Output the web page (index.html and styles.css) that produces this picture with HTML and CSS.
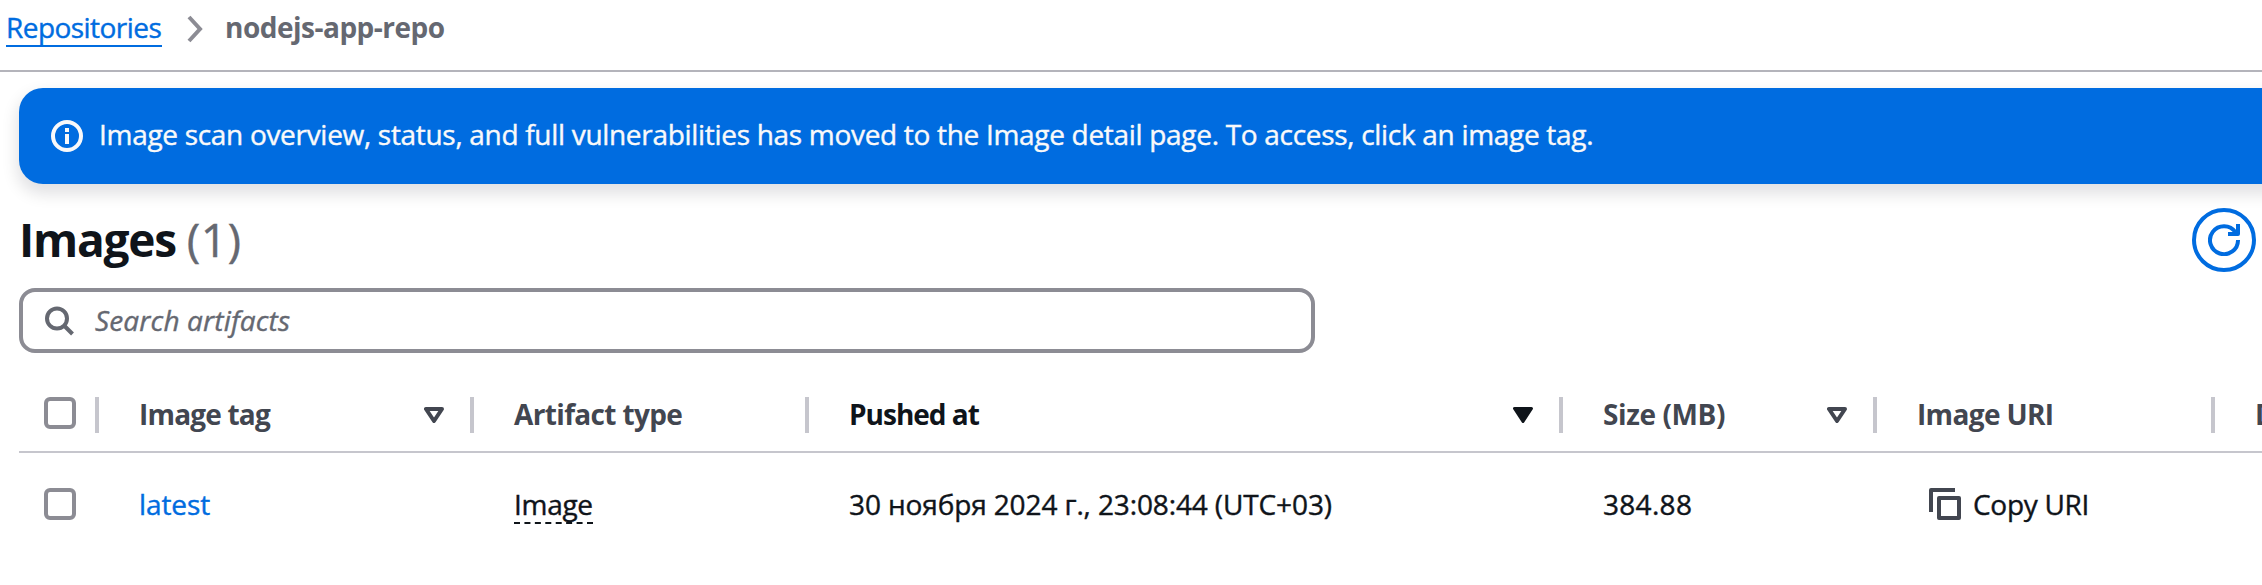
FILE: index.html
```html
<!DOCTYPE html>
<html lang="en">
<head>
<meta charset="utf-8">
<title>nodejs-app-repo</title>
<link rel="stylesheet" href="styles.css">
</head>
<body>
<nav class="breadcrumbs">
  <a class="crumb-link" href="#">Repositories</a>
  <svg class="chevron" width="16" height="28" viewBox="0 0 16 28"><path d="M2 2l11 12L2 26" fill="none" stroke="#8c8c94" stroke-width="4"/></svg>
  <span class="crumb-current">nodejs-app-repo</span>
</nav>
<main class="content">
  <div class="flash">
    <svg class="flash-icon" width="32" height="32" viewBox="0 0 32 32"><circle cx="16" cy="16" r="14" fill="none" stroke="#f9f9fa" stroke-width="4"/><path d="M14 8h4v4h-4zM14 14h4v10h-4z" fill="#f9f9fa"/></svg>
    <span class="flash-text">Image scan overview, status, and full vulnerabilities has moved to the Image detail page. To access, click an image tag.</span>
  </div>
  <header class="title-row">
    <h1 class="title">Images <span class="counter">(1)</span></h1>
    <button class="refresh" aria-label="Refresh">
      <svg width="32" height="32" viewBox="0 0 32 32" fill="none" stroke="#006ce0" stroke-width="4"><path d="M30 16A14 14 0 1 1 27.5 8.2"/><path d="M30 0v10H20" stroke-linejoin="round"/></svg>
    </button>
  </header>
  <div class="search">
    <svg width="30" height="30" viewBox="0 0 30 30" fill="none" stroke="#656871" stroke-width="4"><circle cx="12" cy="12.5" r="10"/><path d="M19 19.5l8.5 8.5"/></svg>
    <span class="search-text">Search artifacts</span>
  </div>
  <div class="table">
    <div class="row head">
      <div class="cell check"><span class="box"></span></div>
      <div class="cell"><span class="label tag-label">Image tag</span><svg class="sort" width="20" height="16" viewBox="0 0 20 16"><path d="M2 2h16l-8 12z" fill="none" stroke="#424650" stroke-width="4" stroke-linejoin="round"/></svg></div>
      <div class="cell"><span class="label type-label">Artifact type</span></div>
      <div class="cell sorted"><span class="label pushed-label">Pushed at</span><svg class="sort" width="20" height="16" viewBox="0 0 20 16"><path d="M1.5 1.5h17L10 14.5z" fill="#0f141a" stroke="#0f141a" stroke-width="3" stroke-linejoin="round"/></svg></div>
      <div class="cell"><span class="label size-label">Size (MB)</span><svg class="sort" width="20" height="16" viewBox="0 0 20 16"><path d="M2 2h16l-8 12z" fill="none" stroke="#424650" stroke-width="4" stroke-linejoin="round"/></svg></div>
      <div class="cell"><span class="label uri-label">Image URI</span></div>
      <div class="cell last"><span class="label">Digest</span></div>
    </div>
    <div class="row body">
      <div class="cell check"><span class="box"></span></div>
      <div class="cell"><a class="tag-link" href="#">latest</a></div>
      <div class="cell"><span class="artifact">Image</span></div>
      <div class="cell"><span class="date">30 ноября 2024 г., 23:08:44 (UTC+03)</span></div>
      <div class="cell"><span class="size">384.88</span></div>
      <div class="cell copy"><svg width="32" height="32" viewBox="0 0 32 32" fill="none" stroke="#424650" stroke-width="4"><path d="M2 24V2h24" stroke-linejoin="round"/><path d="M10 10h20v20H10z" stroke-linejoin="round"/></svg><span class="copy-label">Copy URI</span></div>
      <div class="cell last"></div>
    </div>
  </div>
</main>
</body>
</html>
```
FILE: styles.css
```css
* { box-sizing: border-box; }
body {
  margin: 0;
  height: 585px;
  overflow: hidden;
  background: #fff;
  color: #0f141a;
  font: 28px/40px "Open Sans", "Noto Sans", sans-serif;
}
svg { display: block; flex: none; }
/* Regular text is drawn a touch heavier than the font's own weight */
.crumb-link, .flash-text, .counter, .search-text, .body { -webkit-text-stroke: 0.4px; }
.breadcrumbs {
  display: flex;
  align-items: flex-start;
  height: 72px;
  padding: 7px 0 0 6px;
  border-bottom: 2px solid #b4b4bb;
}
.crumb-link {
  width: 156px;
  height: 40px;
  color: #006ce0;
  text-decoration: none;
  letter-spacing: -0.55px;
  white-space: nowrap;
  border-bottom: 2px solid #006ce0;
}
.chevron { margin: 8px 0 0 25px; }
.crumb-current {
  margin-left: 22px;
  color: #656871;
  font-weight: 700;
  letter-spacing: -0.5px;
}
.content { padding: 16px 0 0 19px; }
.flash {
  display: flex;
  align-items: center;
  height: 96px;
  margin-right: -40px;
  padding-left: 32px;
  border-radius: 24px;
  background: #006ce0;
  color: #f9f9fa;
  box-shadow: 0 8px 16px 2px rgba(0, 7, 22, 0.12);
}
.flash-text {
  margin-left: 16px;
  padding-bottom: 4px;
  letter-spacing: -0.305px;
  white-space: nowrap;
}
.title-row {
  display: flex;
  align-items: center;
  justify-content: space-between;
  height: 64px;
  margin: 24px 6px 0 0;
}
.title {
  margin: 0;
  padding-bottom: 3px;
  font-size: 46px;
  line-height: 60px;
  font-weight: 700;
  letter-spacing: -1.2px;
}
.counter { color: #656871; font-weight: 400; letter-spacing: 0.4px; }
.refresh {
  display: grid;
  place-items: center;
  width: 64px;
  height: 64px;
  padding: 0;
  border: 4px solid #006ce0;
  border-radius: 50%;
  background: #fff;
}
.search {
  display: flex;
  align-items: center;
  width: 1296px;
  height: 65px;
  margin-top: 16px;
  padding-left: 22px;
  border: 4px solid #8c8c94;
  border-radius: 16px;
}
.search-text {
  margin-left: 20px;
  padding-bottom: 1px;
  color: #656871;
  font-style: italic;
  letter-spacing: 0.15px;
}
.table { margin-top: 22px; }
.row {
  display: grid;
  grid-template-columns: 80px 375px 335px 754px 314px 338px 1fr;
}
.head {
  height: 78px;
  border-bottom: 2px solid #c6c6cd;
  color: #424650;
  font-weight: 700;
}
.cell {
  display: flex;
  align-items: center;
  padding-left: 40px;
  white-space: nowrap;
}
.check { padding-left: 25px; }
.box {
  width: 32px;
  height: 32px;
  border: 4px solid #8c8c94;
  border-radius: 6px;
}
.label { padding-top: 2px; }
/* Column separators centred on the header text */
.head .cell {
  background: linear-gradient(#c6c6cd, #c6c6cd) right 22px / 4px 36px no-repeat;
}
.head .last { background: none; overflow: hidden; }
.last { min-width: 0; }
.sort { margin: 4px 30px 0 auto; }
.sorted { color: #0f141a; }
.tag-label { letter-spacing: -0.8px; }
.type-label { letter-spacing: -0.65px; }
.pushed-label { letter-spacing: -1px; }
.size-label { letter-spacing: -0.4px; }
.uri-label { letter-spacing: -0.65px; }
.body { height: 102px; }
.tag-link { color: #006ce0; text-decoration: none; letter-spacing: -0.1px; }
.artifact {
  height: 40px;
  letter-spacing: -0.3px;
  border-bottom: 2px dashed #0f141a;
}
.date { letter-spacing: -0.12px; }
.size { letter-spacing: 0.3px; }
.copy { padding-left: 52px; }
.copy-label { margin-left: 12px; letter-spacing: -0.3px; }
```
